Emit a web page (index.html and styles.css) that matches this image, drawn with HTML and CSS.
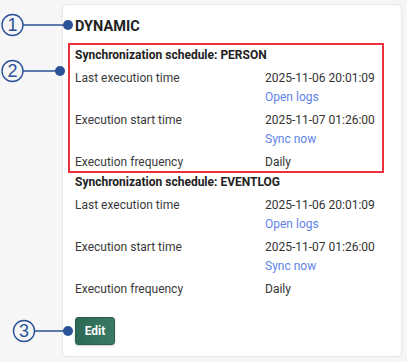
FILE: index.html
```html
<!DOCTYPE html>
<html>
<head>
<meta charset="utf-8">
<link rel="stylesheet" href="styles.css">
</head>
<body>
<div class="stage">
  <div class="card">
    <h1 class="title">DYNAMIC</h1>
    <div class="sections">
      <section class="schedule highlighted">
        <h2 class="sched-title">Synchronization schedule: PERSON</h2>
        <div class="row">
          <div class="label">Last execution time</div>
          <div class="value">2025-11-06 20:01:09<a class="link">Open logs</a></div>
        </div>
        <div class="row">
          <div class="label">Execution start time</div>
          <div class="value">2025-11-07 01:26:00<a class="link">Sync now</a></div>
        </div>
        <div class="row">
          <div class="label">Execution frequency</div>
          <div class="value">Daily</div>
        </div>
      </section>
      <section class="schedule">
        <h2 class="sched-title">Synchronization schedule: EVENTLOG</h2>
        <div class="row">
          <div class="label">Last execution time</div>
          <div class="value">2025-11-06 20:01:09<a class="link">Open logs</a></div>
        </div>
        <div class="row">
          <div class="label">Execution start time</div>
          <div class="value">2025-11-07 01:26:00<a class="link">Sync now</a></div>
        </div>
        <div class="row">
          <div class="label">Execution frequency</div>
          <div class="value">Daily</div>
        </div>
      </section>
    </div>
    <button class="edit">Edit</button>
  </div>

  <svg class="annotations" width="407" height="362" viewBox="0 0 407 362">
    <g stroke="#2b5297" fill="none" stroke-width="1.4">
      <circle cx="12.5" cy="25" r="10.5"/>
      <line x1="23" y1="25" x2="68" y2="25"/>
      <circle cx="12.5" cy="71" r="10.5"/>
      <line x1="23" y1="71" x2="60" y2="71"/>
      <circle cx="24" cy="331" r="10.5"/>
      <line x1="34.5" y1="331" x2="68" y2="331"/>
    </g>
    <g fill="#2b5297">
      <circle cx="68" cy="25" r="5"/>
      <circle cx="60" cy="71" r="5"/>
      <circle cx="68" cy="331" r="5"/>
    </g>
  </svg>
  <div class="num n1">1</div>
  <div class="num n2">2</div>
  <div class="num n3">3</div>
</div>
</body>
</html>
```

FILE: styles.css
```css
* { box-sizing: border-box; }
html, body { margin: 0; padding: 0; }
body {
  background: #f6f6f6;
  font-family: Roboto, "Liberation Sans", sans-serif;
  color: #333;
  width: 407px;
  height: 362px;
  overflow: hidden;
}
.stage {
  position: relative;
  width: 407px;
  height: 362px;
  padding: 4px 5px 5px 62px;
}
.card {
  background: #fff;
  border: 1px solid #e8e8e8;
  border-radius: 5px;
  box-shadow: 0 0 2px rgba(0,0,0,0.06);
  height: 353px;
  padding: 12px 12px 0 12px;
}
.title {
  margin: 0;
  font-size: 14.5px;
  font-weight: 700;
  line-height: 20px;
  color: #222;
}
.sections {
  margin-top: 9px;
  display: flex;
  flex-direction: column;
  gap: 1px;
}
.schedule {
  position: relative;
  display: flex;
  flex-direction: column;
  gap: 4px;
}
.highlighted::after {
  content: "";
  position: absolute;
  left: -7px;
  top: -3px;
  right: 5px;
  bottom: -1px;
  border: 2px solid #e8323c;
  pointer-events: none;
}
.sched-title {
  margin: 0;
  font-size: 12px;
  font-weight: 700;
  line-height: 19px;
  color: #222;
}
.row {
  display: grid;
  grid-template-columns: 190px 1fr;
  font-size: 12px;
  line-height: 19px;
}
.label { color: #3a3a3a; }
.value {
  display: flex;
  flex-direction: column;
  color: #333;
}
.link {
  color: #5f83e6;
  cursor: pointer;
}
.edit {
  margin-top: 18px;
  width: 40px;
  height: 28px;
  border: 1px solid #2a5e4b;
  border-radius: 3px;
  background: linear-gradient(90deg, #2e6a55, #3a7a64);
  color: #fff;
  font-family: Roboto, "Liberation Sans", sans-serif;
  font-weight: 700;
  font-size: 12px;
  padding: 0;
  box-shadow: 0 1px 2px rgba(0,0,0,0.2);
}
.annotations {
  position: absolute;
  left: 0;
  top: 0;
}
.num {
  position: absolute;
  width: 21px;
  height: 21px;
  line-height: 21px;
  text-align: center;
  font-family: "Liberation Sans", sans-serif;
  font-size: 18px;
  color: #2b5297;
}
.n1 { left: 2px; top: 14.5px; }
.n2 { left: 2px; top: 60.5px; }
.n3 { left: 13.5px; top: 320.5px; }
```
